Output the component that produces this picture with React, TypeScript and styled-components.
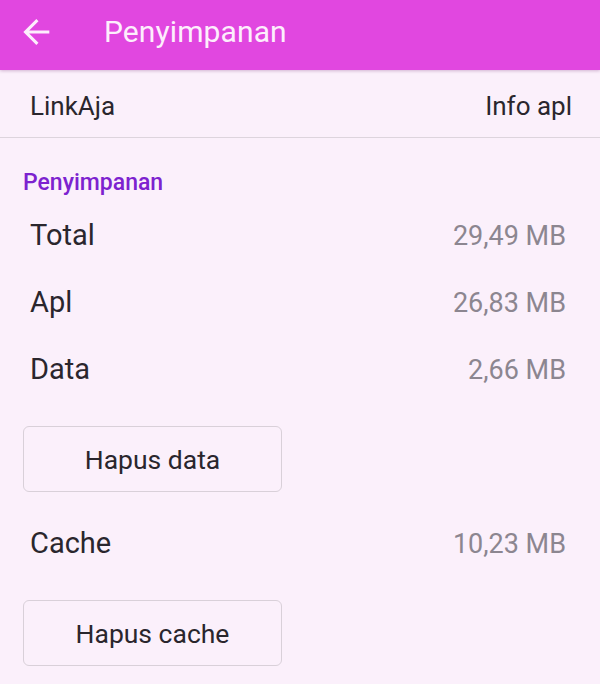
import styled, { createGlobalStyle } from 'styled-components';

interface IStorageRow {
   label: string;
   value: string;
}

const GlobalStyle = createGlobalStyle`
   html, body {
      margin: 0;
      padding: 0;
      background: #fbf0fb;
   }
   body {
      font-family: Roboto, 'Noto Sans', sans-serif;
      color: #2a262d;
   }
`;

const Container = styled.div`
   width: 600px;
   min-height: 684px;
   background: #fbf0fb;
   overflow: hidden;
`;

const AppBar = styled.header`
   height: 70px;
   box-sizing: border-box;
   padding: 0 0 7px 16px;
   display: flex;
   align-items: center;
   gap: 48px;
   background: #e147e0;
   box-shadow: 0 1px 3px rgba(90, 0, 90, 0.25);
   position: relative;
`;

const BackButton = styled.button`
   width: 40px;
   height: 40px;
   padding: 0;
   border: none;
   background: transparent;
   display: flex;
   color: #fdeefc;
   cursor: pointer;
`;

const AppBarTitle = styled.h1`
   margin: 0;
   font-size: 30px;
   font-weight: 400;
   color: #fdeefc;
   letter-spacing: 0.1px;
`;

const AppRow = styled.div`
   height: 68px;
   box-sizing: border-box;
   padding: 4px 28px 0 30px;
   display: flex;
   align-items: center;
   justify-content: space-between;
   border-bottom: 1px solid #ddd4dd;
   font-size: 26px;
`;

const Section = styled.section`
   padding: 30px 34px 0 23px;
`;

const SectionTitle = styled.h2`
   margin: 0 0 4px;
   font-size: 23px;
   line-height: 30px;
   font-weight: 500;
   color: #7d22cf;
`;

const Row = styled.div<{ $top?: number }>`
   height: 67px;
   line-height: 67px;
   margin-top: ${(props) => props.$top ?? 0}px;
   padding-left: 7px;
   display: flex;
   align-items: baseline;
   justify-content: space-between;
`;

const Label = styled.span`
   font-size: 29px;
   color: #2a262d;
`;

const Value = styled.span`
   font-size: 27px;
   color: #8c8690;
`;

const ActionButton = styled.button<{ $top: number }>`
   display: block;
   width: 259px;
   height: 66px;
   margin: ${(props) => props.$top}px 0 0;
   border: 1.5px solid #d9d0d9;
   border-radius: 6px;
   background: transparent;
   font-family: Roboto, 'Noto Sans', sans-serif;
   font-size: 26.5px;
   color: #2a262d;
   cursor: pointer;
`;

const rows: IStorageRow[] = [
   { label: 'Total', value: '29,49 MB' },
   { label: 'Apl', value: '26,83 MB' },
   { label: 'Data', value: '2,66 MB' },
];

const StorageRow = ({ label, value, top }: IStorageRow & { top?: number }) => (
   <Row $top={top}>
      <Label>{label}</Label>
      <Value>{value}</Value>
   </Row>
);

const App = () => {
   return (
      <Container>
         <GlobalStyle />
         <AppBar>
            <BackButton aria-label="Kembali">
               <svg width="40" height="40" viewBox="0 0 24 24" fill="currentColor">
                  <path d="M20 11.1H7.9l5.6-5.6-1.3-1.3L4.4 12l7.8 7.8 1.3-1.3-5.6-5.6H20z" />
               </svg>
            </BackButton>
            <AppBarTitle>Penyimpanan</AppBarTitle>
         </AppBar>
         <AppRow>
            <span>LinkAja</span>
            <span>Info apl</span>
         </AppRow>
         <Section>
            <SectionTitle>Penyimpanan</SectionTitle>
            {rows.map((row) => (
               <StorageRow key={row.label} {...row} />
            ))}
            <ActionButton $top={23}>Hapus data</ActionButton>
            <StorageRow label="Cache" value="10,23 MB" top={18} />
            <ActionButton $top={23}>Hapus cache</ActionButton>
         </Section>
      </Container>
   );
};

export default App;
